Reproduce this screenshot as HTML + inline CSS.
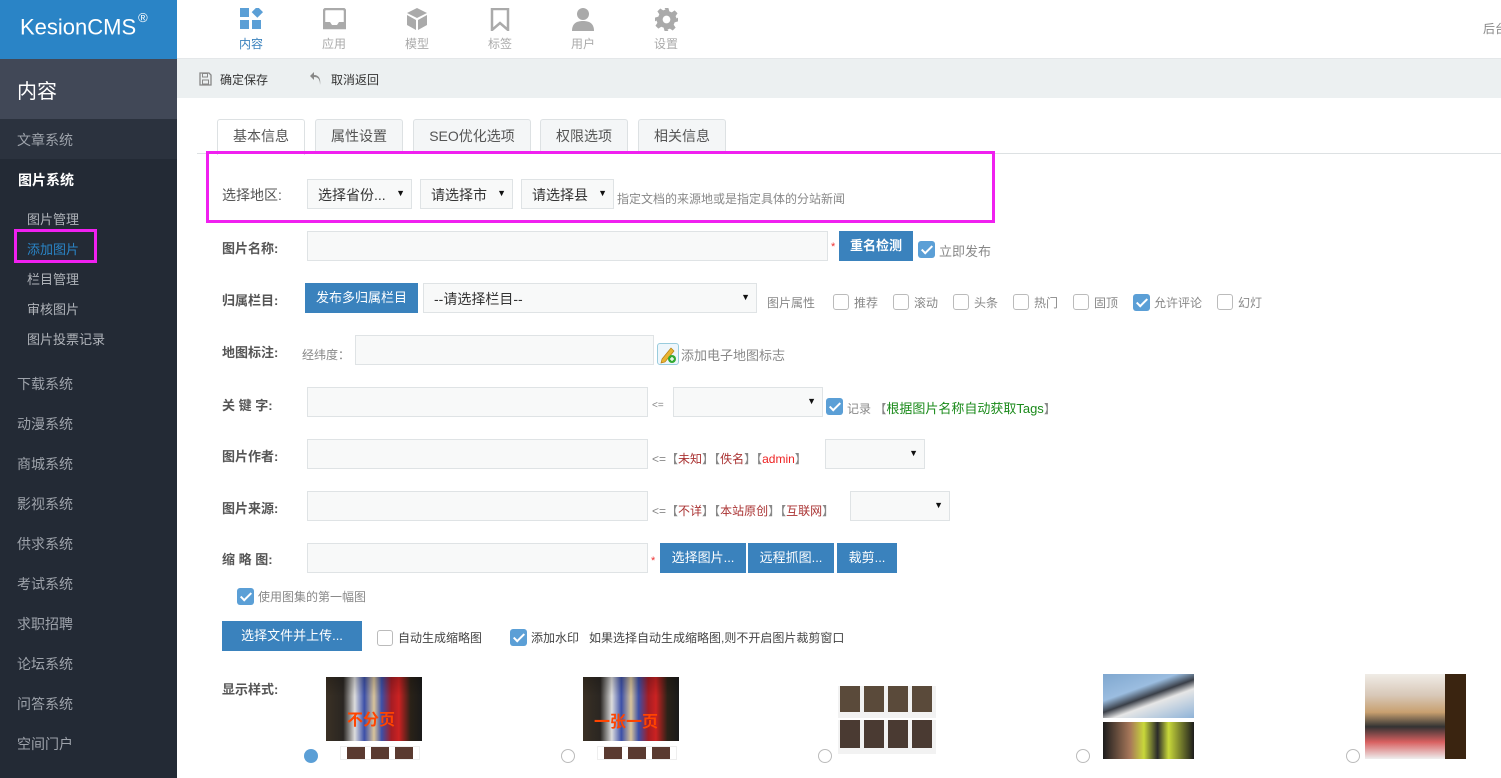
<!DOCTYPE html>
<html><head><meta charset="utf-8">
<style>
*{margin:0;padding:0;box-sizing:border-box}
body{width:1501px;height:778px;overflow:hidden;position:relative;background:#fff;font-family:"Liberation Sans","Noto Sans CJK SC",sans-serif;font-size:13px;color:#555}
.a{position:absolute;white-space:nowrap}
.side{left:0;top:0;width:177px;height:778px;background:#232a35}
.logo{left:0;top:0;width:177px;height:59px;background:#2a84c6;color:#fff;font-size:22px;padding:14px 0 0 20px}
.logo sup{font-size:13px;position:relative;top:-4px;left:2px}
.shd{left:0;top:59px;width:177px;height:60px;background:#414857;color:#fff;font-size:20px;padding:16px 0 0 17px}
.mi{left:17px;color:#9ea3ab;font-size:14px}
.si{left:27px;color:#b0b4ba;font-size:13px}
.top{left:177px;top:0;width:1324px;height:59px;background:#fff;border-bottom:1px solid #e4e7e9}
.nav{width:60px;text-align:center;top:35px;font-size:12px;color:#aaa}
.tb{left:177px;top:59px;width:1324px;height:39px;background:#ecf0f1}
.panel{left:197px;top:98px;width:1304px;height:680px;background:#fff}
.tab{top:119px;height:35px;border:1px solid #dde1e3;border-bottom:none;background:#f4f6f7;border-radius:3px 3px 0 0;font-size:14px;color:#555;text-align:center;line-height:33px}
.lbl{left:222px;font-size:13px;color:#555;font-weight:bold}
.inp{height:30px;background:#f8f9f9;border:1px solid #dfe3e5}
.sel{height:30px;background:#f8f9f9;border:1px solid #dfe3e5;font-size:14px;color:#333;padding:5px 0 0 10px}
.sel:after{content:"▼";position:absolute;right:6px;top:8px;font-size:9px;color:#111}
.btn{background:#3a82bd;color:#fff;font-size:13px;height:30px;line-height:30px;text-align:center}
.cb{width:16px;height:16px;border:1px solid #bbb;border-radius:3px;background:#fff}
.cbk{width:17px;height:17px;border-radius:3px;background:#5b9fd6}
.cbk:after{content:"";position:absolute;left:6px;top:2px;width:4px;height:9px;border:solid #fff;border-width:0 2px 2px 0;transform:rotate(45deg)}
.gt{font-size:12px;color:#888}
.br{color:#a33}
.rd{width:14px;height:14px;border:1px solid #bbb;border-radius:50%}
.ph{background:linear-gradient(180deg,rgba(0,0,0,.2),rgba(0,0,0,0) 30%),linear-gradient(90deg,#3a3024 0%,#2a2622 18%,#ddd 30%,#3b4fa8 40%,#d9c49a 50%,#3b4fa8 58%,#a51d24 68%,#c22 76%,#2a2218 88%,#1a1a1a)}
.strip{background:repeating-linear-gradient(90deg,#fff 0 6px,#5a3a30 6px 24px);border:1px solid #eee}
</style></head><body>
<div class="a side"></div>
<div class="a logo">KesionCMS<sup>®</sup></div>
<div class="a shd">内容</div>
<div class="a" style="left:0;top:119px;width:177px;height:40px;background:#2b323e"></div>
<div class="a mi" style="top:130px">文章系统</div>
<div class="a" style="left:18px;top:170px;color:#fff;font-size:14px;font-weight:bold">图片系统</div>
<div class="a si" style="top:209px">图片管理</div>
<div class="a" style="left:14px;top:229px;width:83px;height:34px;border:3px solid #f020f0"></div>
<div class="a si" style="top:239px;color:#2a84c6">添加图片</div>
<div class="a si" style="top:269px">栏目管理</div>
<div class="a si" style="top:299px">审核图片</div>
<div class="a si" style="top:329px">图片投票记录</div>
<div class="a mi" style="top:374px">下载系统</div>
<div class="a mi" style="top:414px">动漫系统</div>
<div class="a mi" style="top:454px">商城系统</div>
<div class="a mi" style="top:494px">影视系统</div>
<div class="a mi" style="top:534px">供求系统</div>
<div class="a mi" style="top:574px">考试系统</div>
<div class="a mi" style="top:614px">求职招聘</div>
<div class="a mi" style="top:654px">论坛系统</div>
<div class="a mi" style="top:694px">问答系统</div>
<div class="a mi" style="top:734px">空间门户</div>

<div class="a top"></div>
<svg class="a" style="left:240px;top:8px" width="23" height="22"><rect x="0" y="0" width="9" height="9" fill="#5b9fd6"/><rect x="13" y="0" width="8" height="8" fill="#5b9fd6" transform="rotate(45 17 4.5)"/><rect x="0" y="12" width="9" height="9" fill="#5b9fd6"/><rect x="12" y="12" width="9" height="9" fill="#5b9fd6"/></svg>
<div class="a nav" style="left:221px;color:#3a82bd">内容</div>
<svg class="a" style="left:323px;top:8px" width="23" height="22"><path d="M3 1h17a2 2 0 0 1 2 2v17H1V3a2 2 0 0 1 2-2z" fill="none" stroke="#aaa" stroke-width="2.5"/><path d="M1 14h6l2 3h5l2-3h6v7H1z" fill="#aaa"/></svg>
<div class="a nav" style="left:304px">应用</div>
<svg class="a" style="left:406px;top:7px" width="22" height="24"><path d="M11 1l10 5-10 5L1 6z" fill="#aaa"/><path d="M1 8l9 5v10l-9-5z M21 8l-9 5v10l9-5z" fill="#aaa"/></svg>
<div class="a nav" style="left:387px">模型</div>
<svg class="a" style="left:490px;top:8px" width="20" height="23"><path d="M2 1h16v21l-8-7-8 7z" fill="none" stroke="#aaa" stroke-width="2.5"/></svg>
<div class="a nav" style="left:470px">标签</div>
<svg class="a" style="left:571px;top:8px" width="24" height="23"><circle cx="12" cy="6" r="6" fill="#aaa"/><path d="M1 23c0-8 5-10 11-10s11 2 11 10z" fill="#aaa"/></svg>
<div class="a nav" style="left:553px">用户</div>
<svg class="a" style="left:655px;top:8px" width="23" height="23" viewBox="0 0 24 24"><path fill="#aaa" d="M10 0h4l1 3.5 2.5 1 3-2 3 3-2 3 1 2.5L24 10v4l-3.5 1-1 2.5 2 3-3 3-3-2-2.5 1L14 24h-4l-1-3.5-2.5-1-3 2-3-3 2-3-1-2.5L0 14v-4l3.5-1 1-2.5-2-3 3-3 3 2 2.5-1z"/><circle cx="12" cy="12" r="4" fill="#fff"/></svg>
<div class="a nav" style="left:636px">设置</div>
<div class="a" style="left:1483px;top:20px;font-size:12px;color:#888">后台</div>

<div class="a tb"></div>
<svg class="a" style="left:199px;top:72px" width="13" height="14"><path d="M1 1h9l2 2v10H1z" fill="none" stroke="#888" stroke-width="1.3"/><rect x="3.5" y="1.5" width="5" height="3.5" fill="none" stroke="#888"/><rect x="3.5" y="8" width="6" height="4" fill="none" stroke="#888"/></svg>
<div class="a" style="left:220px;top:71px;font-size:12px;color:#333">确定保存</div>
<svg class="a" style="left:309px;top:71px" width="12" height="15"><path d="M5 1L1 5l4 4V6c4 0 6 2 6 8 1-6-1-10-6-10z" fill="#888"/></svg>
<div class="a" style="left:331px;top:71px;font-size:12px;color:#333">取消返回</div>

<div class="a panel"></div>
<div class="a" style="left:197px;top:153px;width:1304px;height:1px;background:#dde1e3"></div>
<div class="a tab" style="left:217px;width:88px;background:#fff;height:36px">基本信息</div>
<div class="a tab" style="left:315px;width:88px">属性设置</div>
<div class="a tab" style="left:413px;width:118px">SEO优化选项</div>
<div class="a tab" style="left:540px;width:88px">权限选项</div>
<div class="a tab" style="left:638px;width:88px">相关信息</div>

<div class="a" style="left:206px;top:151px;width:789px;height:72px;border:3px solid #f020f0"></div>
<div class="a lbl" style="top:185px;font-weight:normal;font-size:14px">选择地区:</div>
<div class="a sel" style="left:307px;top:179px;width:105px">选择省份...</div>
<div class="a sel" style="left:420px;top:179px;width:93px">请选择市</div>
<div class="a sel" style="left:521px;top:179px;width:93px">请选择县</div>
<div class="a gt" style="left:617px;top:190px">指定文档的来源地或是指定具体的分站新闻</div>

<div class="a lbl" style="top:238px">图片名称:</div>
<div class="a inp" style="left:307px;top:231px;width:521px"></div>
<div class="a" style="left:831px;top:241px;color:#e33;font-size:11px">*</div>
<div class="a btn" style="left:839px;top:231px;width:74px;font-weight:bold">重名检测</div>
<div class="a cbk" style="left:918px;top:241px"></div>
<div class="a gt" style="left:939px;top:241px;font-size:13px">立即发布</div>

<div class="a lbl" style="top:290px">归属栏目:</div>
<div class="a btn" style="left:305px;top:283px;width:113px">发布多归属栏目</div>
<div class="a sel" style="left:423px;top:283px;width:334px">--请选择栏目--</div>
<div class="a gt" style="left:767px;top:294px">图片属性</div>
<div class="a cb" style="left:833px;top:294px"></div><div class="a gt" style="left:854px;top:294px">推荐</div>
<div class="a cb" style="left:893px;top:294px"></div><div class="a gt" style="left:914px;top:294px">滚动</div>
<div class="a cb" style="left:953px;top:294px"></div><div class="a gt" style="left:974px;top:294px">头条</div>
<div class="a cb" style="left:1013px;top:294px"></div><div class="a gt" style="left:1034px;top:294px">热门</div>
<div class="a cb" style="left:1073px;top:294px"></div><div class="a gt" style="left:1094px;top:294px">固顶</div>
<div class="a cbk" style="left:1133px;top:294px"></div><div class="a gt" style="left:1154px;top:294px">允许评论</div>
<div class="a cb" style="left:1217px;top:294px"></div><div class="a gt" style="left:1238px;top:294px">幻灯</div>

<div class="a lbl" style="top:342px">地图标注:</div>
<div class="a gt" style="left:302px;top:346px">经纬度：</div>
<div class="a inp" style="left:355px;top:335px;width:299px"></div>
<div class="a" style="left:657px;top:343px;width:22px;height:22px;border:1px solid #9cd;border-radius:3px;background:#eef6fb"><svg width="20" height="20"><path d="M4 15l9-11 3 3-9 11-4 1z" fill="#e9b431" stroke="#b57d12" stroke-width=".7"/><circle cx="14" cy="15" r="4" fill="#3a3"/><path d="M12 15h4M14 13v4" stroke="#fff" stroke-width="1.3"/></svg></div>
<div class="a" style="left:681px;top:345px;font-size:13px;color:#888">添加电子地图标志</div>

<div class="a lbl" style="top:395px">关 键 字:</div>
<div class="a inp" style="left:307px;top:387px;width:341px"></div>
<div class="a gt" style="left:652px;top:400px;font-size:10px">&lt;=</div>
<div class="a sel" style="left:673px;top:387px;width:150px"></div>
<div class="a cbk" style="left:826px;top:398px"></div>
<div class="a gt" style="left:847px;top:398px">记录 【<span style="color:#1a8a1a;font-size:13px">根据图片名称自动获取Tags</span>】</div>

<div class="a lbl" style="top:446px">图片作者:</div>
<div class="a inp" style="left:307px;top:439px;width:341px"></div>
<div class="a gt" style="left:652px;top:450px">&lt;=【<span class="br">未知</span>】【<span class="br">佚名</span>】【<span style="color:#e22">admin</span>】</div>
<div class="a sel" style="left:825px;top:439px;width:100px"></div>

<div class="a lbl" style="top:498px">图片来源:</div>
<div class="a inp" style="left:307px;top:491px;width:341px"></div>
<div class="a gt" style="left:652px;top:502px">&lt;=【<span class="br">不详</span>】【<span class="br">本站原创</span>】【<span class="br">互联网</span>】</div>
<div class="a sel" style="left:850px;top:491px;width:100px"></div>

<div class="a lbl" style="top:549px">缩 略 图:</div>
<div class="a inp" style="left:307px;top:543px;width:341px"></div>
<div class="a" style="left:651px;top:555px;color:#e33;font-size:11px">*</div>
<div class="a btn" style="left:660px;top:543px;width:86px">选择图片...</div>
<div class="a btn" style="left:748px;top:543px;width:86px">远程抓图...</div>
<div class="a btn" style="left:837px;top:543px;width:60px">裁剪...</div>

<div class="a cbk" style="left:237px;top:588px"></div>
<div class="a gt" style="left:258px;top:588px">使用图集的第一幅图</div>

<div class="a btn" style="left:222px;top:621px;width:140px;height:30px">选择文件并上传...</div>
<div class="a cb" style="left:377px;top:630px"></div>
<div class="a" style="left:398px;top:629px;font-size:12px;color:#444">自动生成缩略图</div>
<div class="a cbk" style="left:510px;top:629px"></div>
<div class="a" style="left:531px;top:629px;font-size:12px;color:#444">添加水印 &nbsp; 如果选择自动生成缩略图,则不开启图片裁剪窗口</div>

<div class="a lbl" style="top:679px">显示样式:</div>
<!-- preview 1 -->
<div class="a ph" style="left:326px;top:677px;width:96px;height:64px"></div>
<div class="a" style="left:347px;top:706px;color:#f40;font-size:16px;font-weight:bold">不分页</div>
<div class="a strip" style="left:340px;top:746px;width:80px;height:14px"></div>
<div class="a" style="left:304px;top:749px;width:14px;height:14px;border-radius:50%;background:#5b9fd6"></div>
<!-- preview 2 -->
<div class="a ph" style="left:583px;top:677px;width:96px;height:64px"></div>
<div class="a" style="left:594px;top:708px;color:#f40;font-size:16px;font-weight:bold">一张一页</div>
<div class="a strip" style="left:597px;top:746px;width:80px;height:14px"></div>
<div class="a rd" style="left:561px;top:749px"></div>
<!-- preview 3 -->
<div class="a" style="left:838px;top:686px;width:98px;height:32px;background:repeating-linear-gradient(90deg,#f2f2f2 0 2px,#5a4a3a 2px 22px,#f2f2f2 22px 24px);border-bottom:6px solid #f2f2f2"></div>
<div class="a" style="left:838px;top:720px;width:98px;height:34px;background:repeating-linear-gradient(90deg,#f2f2f2 0 2px,#4a3a32 2px 22px,#f2f2f2 22px 24px);border-bottom:6px solid #f2f2f2"></div>
<div class="a rd" style="left:818px;top:749px"></div>
<!-- preview 4 -->
<div class="a" style="left:1103px;top:674px;width:91px;height:44px;background:linear-gradient(160deg,#7fa7cf,#9bbde0 35%,#3a3f48 50%,#e6e6e6 62%,#8fb3d8)"></div>
<div class="a" style="left:1103px;top:722px;width:91px;height:37px;background:linear-gradient(90deg,#1c1c1c,#a8785a 30%,#c8d83a 45%,#2a2a2a 60%,#c8d83a 72%,#1c1c1c)"></div>
<div class="a rd" style="left:1076px;top:749px"></div>
<!-- preview 5 -->
<div class="a" style="left:1365px;top:674px;width:80px;height:85px;background:linear-gradient(180deg,#f0ece6,#d8c8b8 25%,#c8a070 45%,#333 62%,#d86060 80%,#eee)"></div>
<div class="a" style="left:1445px;top:674px;width:21px;height:85px;background:#3a2410"></div>
<div class="a rd" style="left:1346px;top:749px"></div>
</body></html>
